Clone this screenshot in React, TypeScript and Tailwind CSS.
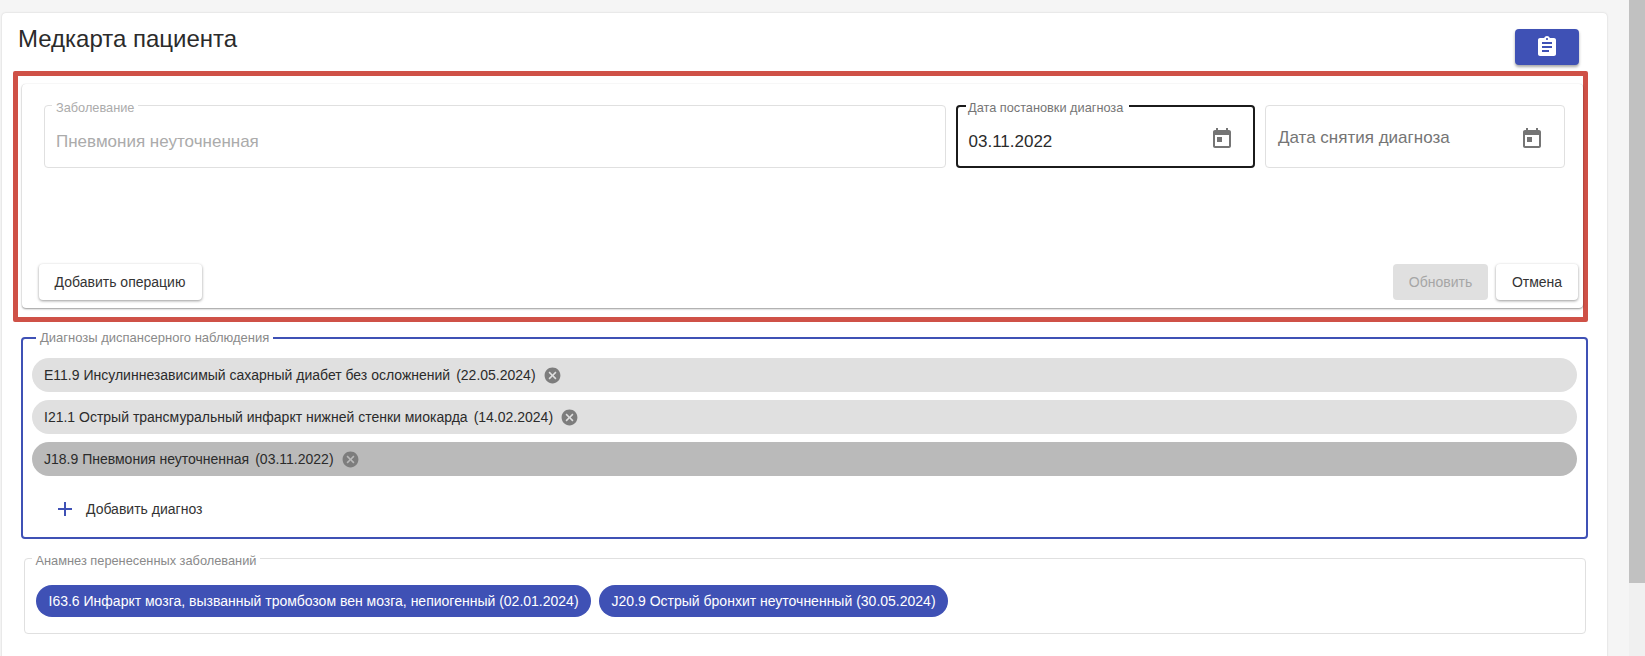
const TODAY =
  "M19 3h-1V1h-2v2H8V1H6v2H5c-1.11 0-1.99.9-1.99 2L3 19c0 1.1.89 2 2 2h14c1.1 0 2-.9 2-2V5c0-1.1-.9-2-2-2zm0 16H5V8h14v11zM7 10h5v5H7z";
const ASSIGNMENT =
  "M19 3h-4.18C14.4 1.84 13.3 1 12 1c-1.3 0-2.4.84-2.82 2H5c-1.1 0-2 .9-2 2v14c0 1.1.9 2 2 2h14c1.1 0 2-.9 2-2V5c0-1.1-.9-2-2-2zm-7 0c.55 0 1 .45 1 1s-.45 1-1 1-1-.45-1-1 .45-1 1-1zm2 14H7v-2h7v2zm3-4H7v-2h10v2zm0-4H7V7h10v2z";
const CANCEL =
  "M12 2C6.47 2 2 6.47 2 12s4.47 10 10 10 10-4.47 10-10S17.53 2 12 2zm5 13.59L15.59 17 12 13.41 8.41 17 7 15.59 10.59 12 7 8.41 8.41 7 12 10.59 15.59 7 17 8.41 13.41 12 17 15.59z";
const ADD = "M19 13h-6v6h-2v-6H5v-2h6V5h2v6h6v2z";

function Icon({ d, className }: { d: string; className: string }) {
  return (
    <svg viewBox="0 0 24 24" fill="currentColor" className={className}>
      <path d={d} />
    </svg>
  );
}

function ActiveChip({ label, date, selected }: { label: string; date: string; selected?: boolean }) {
  return (
    <div
      className={
        selected
          ? "flex h-[34px] items-center rounded-full bg-[#bababa] pl-3 text-sm text-[#2b2b2b]"
          : "flex h-[34px] items-center rounded-full bg-[#e0e0e0] pl-3 text-sm text-[#2b2b2b]"
      }
    >
      <span>{label}</span>
      <span className="ml-[6px]">({date})</span>
      <Icon d={CANCEL} className="ml-[7px] h-[19px] w-[19px] text-[#7d7d7d]" />
    </div>
  );
}

function HistoryChip({ children }: { children: string }) {
  return <div className="flex h-8 items-center rounded-full bg-[#3f51b5] px-[12.5px] text-sm text-white">{children}</div>;
}

export default function App() {
  return (
    <div className="flex h-[656px] w-[1645px] overflow-hidden bg-[#f5f5f5] font-['Liberation_Sans',sans-serif] text-[#2b2b2b]">
      <div className="flex-1 pl-[2px] pr-[22px] pt-[13px]">
        <div className="h-[700px] rounded-[4px] bg-white shadow-[0_0_2px_rgba(0,0,0,0.18)]">
          <div className="flex h-[58px] items-start justify-between pl-4 pr-[28px]">
            <h1 className="mt-[10px] text-[24px] font-normal leading-8 text-[#2b2b2b]">Медкарта пациента</h1>
            <button className="mt-4 flex h-9 w-16 items-center justify-center rounded-[4px] bg-[#3f51b5] text-white shadow-[0_2px_3px_rgba(0,0,0,0.35)]">
              <Icon d={ASSIGNMENT} className="h-6 w-6" />
            </button>
          </div>

          <div className="ml-[11px] h-[251px] w-[1575px] rounded-[2px] border-[5px] border-[#cf5147] pl-1 pt-2">
            <div className="flex h-[224px] flex-col justify-between rounded-[4px] pb-2 shadow-[0_1px_2px_rgba(0,0,0,0.4),0_0_1px_rgba(0,0,0,0.12)]">
              <div className="ml-[22px] mr-[18px] mt-[21px] flex gap-[10px]">
                <div className="relative h-[63px] flex-1 rounded-[4px] border border-[#e0e0e0]">
                  <span className="absolute -top-[5px] left-[7px] bg-white px-1 text-[12.75px] leading-[14px] text-[#ababab]">
                    Заболевание
                  </span>
                  <span className="absolute left-[11px] top-[24px] text-[17px] leading-[24px] text-[#ababab]">
                    Пневмония неуточненная
                  </span>
                </div>
                <div className="relative h-[63px] w-[299px] rounded-[4px] border-2 border-[#1b1b1b]">
                  <span className="absolute -top-[6px] left-[8px] bg-white pl-[2px] pr-[6px] text-[12.75px] leading-[14px] text-[#757575]">
                    Дата постановки диагноза
                  </span>
                  <span className="absolute left-[10.5px] top-[23px] text-[17px] leading-[24px] text-[#2b2b2b]">
                    03.11.2022
                  </span>
                  <Icon d={TODAY} className="absolute right-[19px] top-[20px] h-6 w-6 text-[#757575]" />
                </div>
                <div className="relative h-[63px] w-[300px] rounded-[4px] border border-[#e0e0e0]">
                  <span className="absolute left-[12px] top-[20px] text-[17px] leading-[24px] text-[#757575]">
                    Дата снятия диагноза
                  </span>
                  <Icon d={TODAY} className="absolute right-[20px] top-[21px] h-6 w-6 text-[#757575]" />
                </div>
              </div>

              <div className="ml-[16.5px] mr-[5px] flex items-center justify-between">
                <button className="h-9 w-[163px] rounded-[4px] bg-white text-sm text-[#333333] shadow-[0_1px_3px_rgba(0,0,0,0.4)]">
                  Добавить операцию
                </button>
                <div className="flex gap-2">
                  <button className="h-9 w-[95px] rounded-[4px] bg-[#e0e0e0] text-sm text-[#a6a6a6]">Обновить</button>
                  <button className="h-9 w-[82px] rounded-[4px] bg-white text-sm text-[#333333] shadow-[0_1px_3px_rgba(0,0,0,0.4)]">
                    Отмена
                  </button>
                </div>
              </div>
            </div>
          </div>

          <div className="relative ml-[19px] mt-[15px] h-[202px] w-[1567px] rounded-[4px] border-2 border-[#3f51b5] px-[9px] pt-[19px]">
            <span className="absolute -top-[8px] left-[13px] bg-white px-1 text-[13px] leading-[14px] text-[#8a8a8a]">
              Диагнозы диспансерного наблюдения
            </span>
            <div className="flex flex-col gap-2">
              <ActiveChip label="E11.9 Инсулиннезависимый сахарный диабет без осложнений" date="22.05.2024" />
              <ActiveChip label="I21.1 Острый трансмуральный инфаркт нижней стенки миокарда" date="14.02.2024" />
              <ActiveChip label="J18.9 Пневмония неуточненная" date="03.11.2022" selected />
            </div>
            <div className="mt-4 flex h-[34px] items-center pl-[21px]">
              <Icon d={ADD} className="h-6 w-6 text-[#3f51b5]" />
              <span className="ml-[9px] text-sm text-[#333333]">Добавить диагноз</span>
            </div>
          </div>

          <div className="relative ml-[21.5px] mt-[19px] h-[76px] w-[1562.5px] rounded-[4px] border border-[#e0e0e0] pl-[11.5px] pt-[26px]">
            <span className="absolute -top-[5px] left-[7px] bg-white px-1 text-[12.8px] leading-[14px] text-[#8a8a8a]">
              Анамнез перенесенных заболеваний
            </span>
            <div className="flex gap-2">
              <HistoryChip>I63.6 Инфаркт мозга, вызванный тромбозом вен мозга, непиогенный (02.01.2024)</HistoryChip>
              <HistoryChip>J20.9 Острый бронхит неуточненный (30.05.2024)</HistoryChip>
            </div>
          </div>
        </div>
      </div>
      <div className="h-full w-4 bg-[#f0f0f0]">
        <div className="h-[583px] bg-[#c1c1c1]" />
      </div>
    </div>
  );
}
